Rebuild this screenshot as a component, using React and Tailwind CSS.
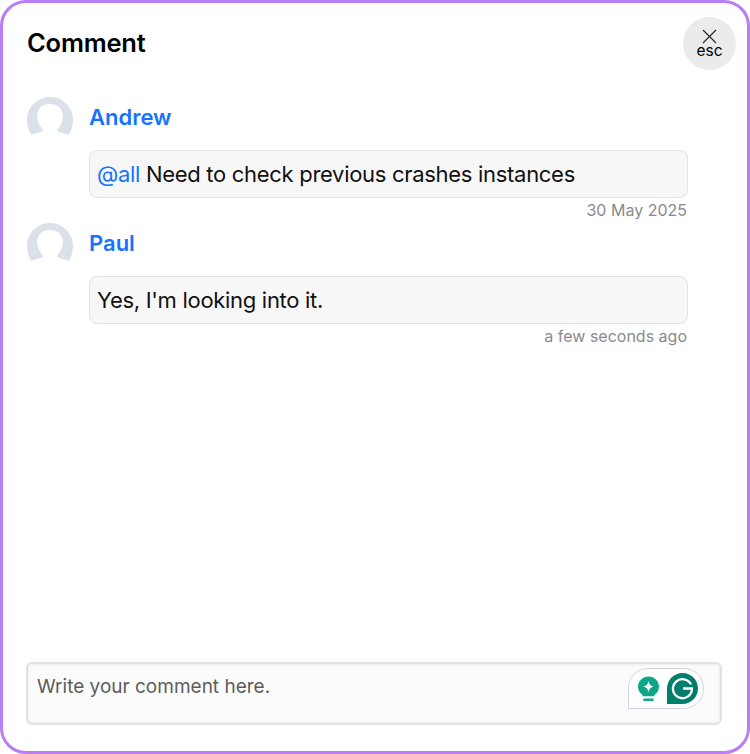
import React from "react";

const font = { fontFamily: "Inter, 'Noto Sans', sans-serif" };

const Avatar = () => (
  <svg width="46" height="40" viewBox="0 0 46 40" className="shrink-0">
    <path
      d="M23 0C10.300 0 0 10.300 0 23c0 5.300 1.300 10.500 4.300 14.700L14.500 34.800c1.300-.4 1.700-1.500.8-2.600C12.400 28.500 10.200 24 10.200 19.500 10.200 11.500 15.200 7 23 7s12.800 4.500 12.800 12.500c0 4.500-2.200 9-5.100 12.700-.9 1.100-.5 2.200.8 2.600l10.200 2.900C44.700 33.500 46 28.300 46 23 46 10.300 35.700 0 23 0z"
      fill="#dbe0e9"
    />
  </svg>
);

const Comment = ({ name, time, children }) => (
  <div className="flex flex-col">
    <div className="flex items-start gap-4">
      <Avatar />
      <span className="text-[22px] leading-10 font-semibold text-[#1573ff]">{name}</span>
    </div>
    <div className="ml-[62px] mt-[13px] mr-[35px] flex h-12 items-center rounded-lg border border-[#e3e3e3] bg-[#f7f7f7] pl-[7px] text-[22px] tracking-[-0.3px] text-[#111]">
      <span>{children}</span>
    </div>
    <div className="mr-[36px] mt-[2px] text-right text-base leading-[20px] text-[#8a8a8a]">{time}</div>
  </div>
);

export default function App() {
  return (
    <div
      style={font}
      className="flex h-[754px] w-[750px] flex-col rounded-[26px] border-[3px] border-[#b97df5] bg-white px-[24px]"
    >
      <header className="flex items-start justify-between pt-[14px]">
        <h1 className="pt-[8px] pb-px text-[25.500px] leading-9 font-semibold tracking-[-0.2px] text-black">Comment</h1>
        <button className="-mr-[13px] flex h-[53px] w-[53px] flex-col items-center justify-center rounded-full bg-[#ebebeb] text-black">
          <svg width="15" height="15" viewBox="0 0 15 15" fill="none" stroke="#222" strokeWidth="1.100">
            <path d="M1 1l13 13M14 1L1 14" />
          </svg>
          <span className="-mt-[1px] text-[15.500px] leading-[15px]">esc</span>
        </button>
      </header>

      <main className="mt-[27px] flex flex-1 flex-col gap-[3px]">
        <Comment name="Andrew" time="30 May 2025">
          <span className="text-[#1573ff]">@all</span> Need to check previous crashes instances
        </Comment>
        <Comment name="Paul" time="a few seconds ago">
          Yes, I'm looking into it.
        </Comment>
      </main>

      <footer className="mb-[26px] -ml-px mr-px flex h-[63px] justify-between rounded-md border-2 border-[#e2e2e2] bg-[#fcfcfc] pl-[9px] pr-[16px] pt-[4px] shadow-[inset_0_0_3px_rgba(0,0,0,0.12)]">
        <span className="pt-[5px] text-[19px] leading-7 text-[#5c5c5c]">Write your comment here.</span>
        <div className="flex h-[41px] w-[76px] items-center gap-[8px] rounded-tl-[20px] rounded-r-[20px] border border-[#cfd5e5] bg-white pl-[9px]">
          <svg width="21" height="26" viewBox="0 0 22 26" className="mt-[1px]">
            <path d="M11 0C4.900 0 0 4.700 0 10.600c0 3.500 1.700 6.200 4.200 8.200.6.500.9 1.100.9 1.800h11.800c0-.7.3-1.300.9-1.800 2.500-2 4.200-4.700 4.200-8.200C22 4.700 17.100 0 11 0z" fill="#0ea78a" />
            <path d="M11 4.500c.8 3.700 2.300 5.200 6 6-3.700.8-5.200 2.300-6 6-.8-3.700-2.300-5.200-6-6 3.700-.8 5.200-2.300 6-6z" fill="#fff" />
            <rect x="5.500" y="23" width="11" height="2.500" rx="1" fill="#0ea78a" />
          </svg>
          <svg width="31" height="31" viewBox="0 0 31 31">
            <path d="M15.500 0C24 0 31 7 31 15.500S24 31 15.500 31H0V15.500C0 7 7 0 15.500 0z" fill="#027e6f" />
            <path d="M24 11.500a9.500 9.500 0 1 0 .8 6V15.500H16" fill="none" stroke="#fff" strokeWidth="2.300" />
          </svg>
        </div>
      </footer>
    </div>
  );
}
